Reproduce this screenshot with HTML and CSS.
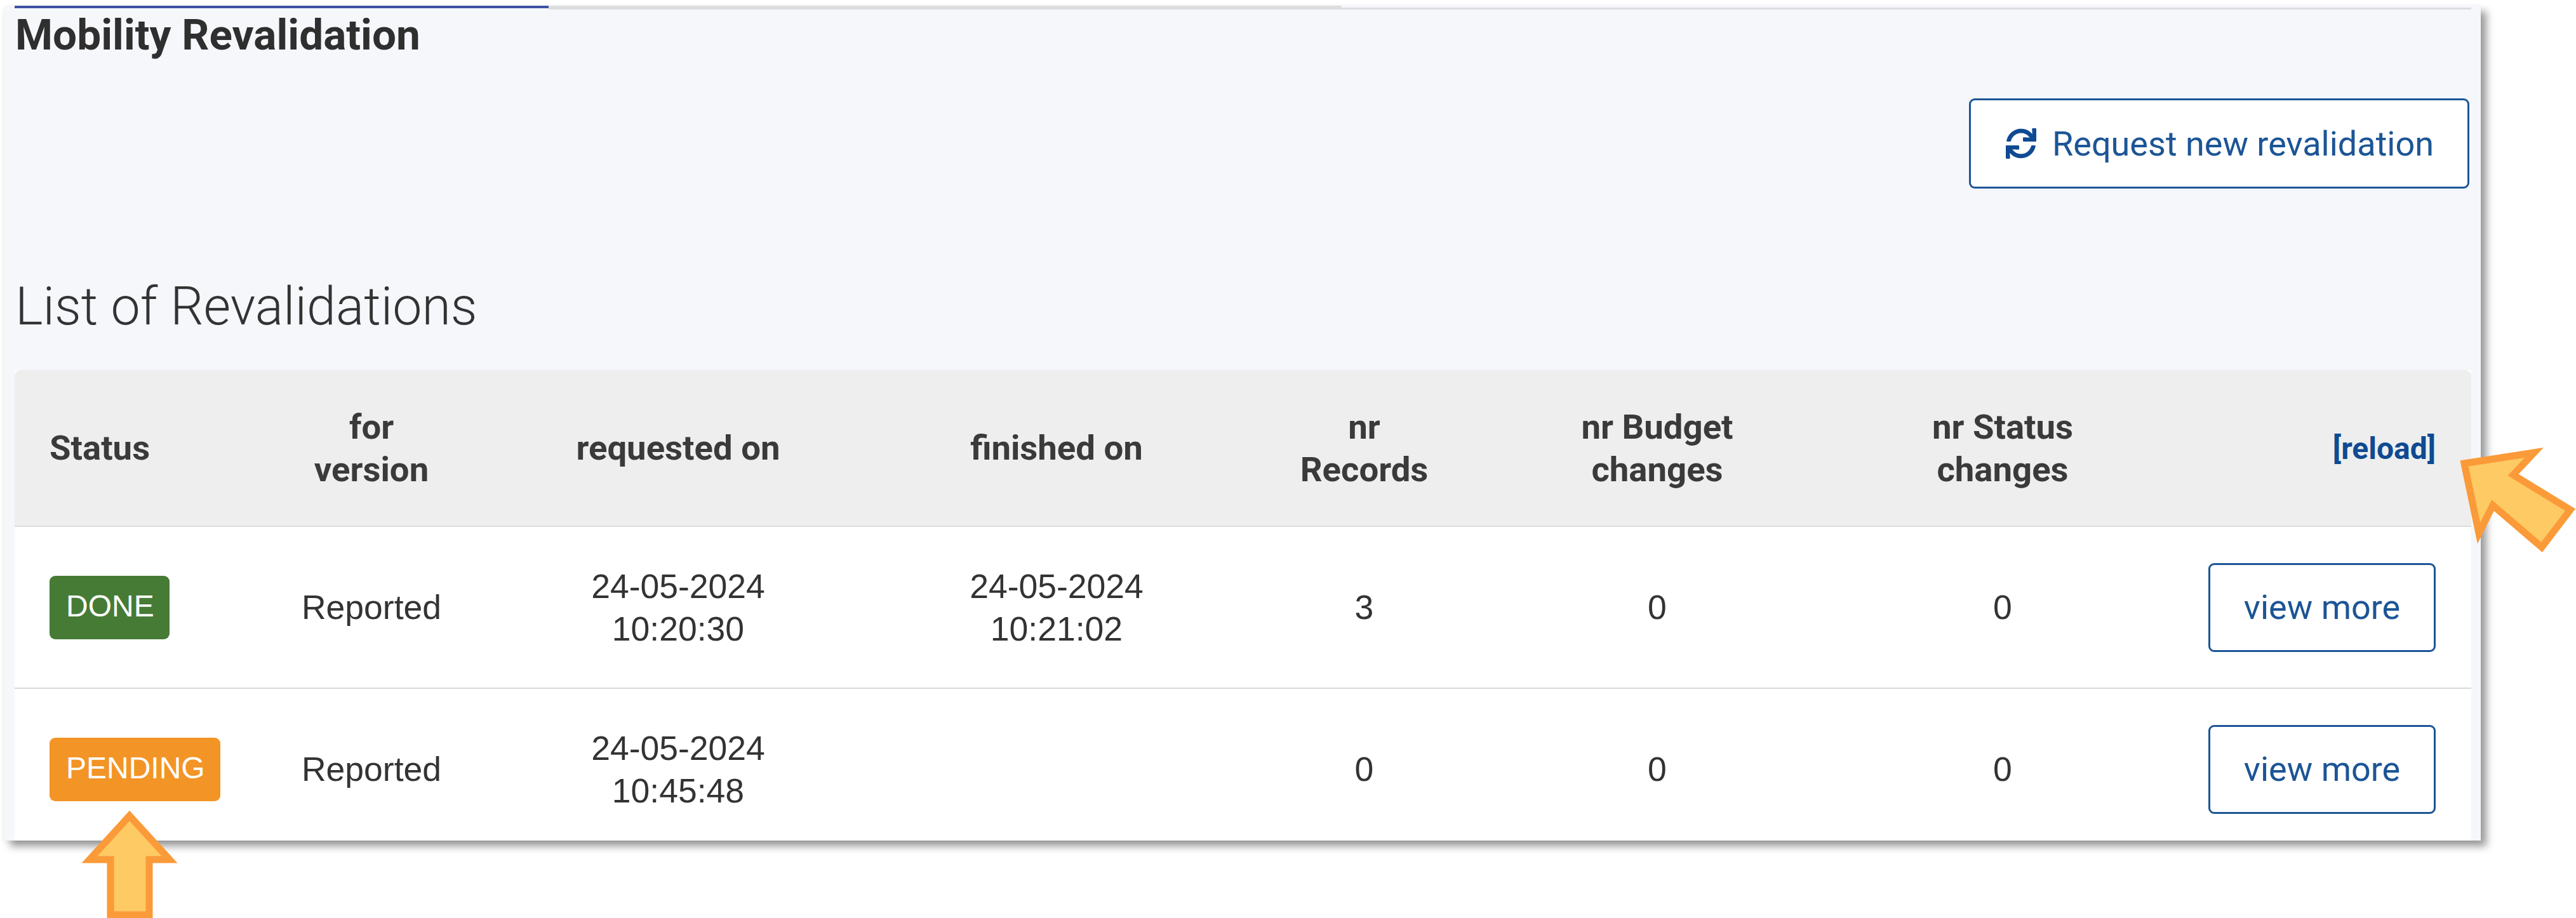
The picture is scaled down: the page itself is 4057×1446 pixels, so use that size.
FILE: index.html
```html
<!DOCTYPE html>
<html lang="en">
<head>
  <meta charset="UTF-8" />
  <title>Mobility Revalidation</title>
  <link rel="stylesheet" href="styles.css">
</head>
<body>
  <div class="panel">
    <div class="tabs">
      <div class="tab-active"></div>
      <div class="tab-rest"></div>
      <div class="tab-line"></div>
    </div>
    <h1 class="title">Mobility Revalidation</h1>
    <div class="actions">
      <button class="btn btn-request">
        <svg class="icon" viewBox="0 0 512 512"><path d="M440.65 12.57l4 82.77A247.16 247.16 0 0 0 255.83 8C134.73 8 33.91 94.92 12.29 209.82A12 12 0 0 0 24.09 224h49.05a12 12 0 0 0 11.67-9.26 175.91 175.91 0 0 1 317-56.94l-101.46-4.86a12 12 0 0 0-12.57 12v47.41a12 12 0 0 0 12 12H500a12 12 0 0 0 12-12V12a12 12 0 0 0-12-12h-47.37a12 12 0 0 0-11.98 12.57zM255.83 432a175.61 175.61 0 0 1-146-77.8l101.8 4.87a12 12 0 0 0 12.57-12v-47.4a12 12 0 0 0-12-12H12a12 12 0 0 0-12 12V500a12 12 0 0 0 12 12h47.35a12 12 0 0 0 12-12.6l-4.15-82.57A247.17 247.17 0 0 0 255.83 504c121.11 0 221.93-86.92 243.55-201.82a12 12 0 0 0-11.8-14.18h-49.05a12 12 0 0 0-11.67 9.26A175.86 175.86 0 0 1 255.83 432z"/></svg>
        Request new revalidation
      </button>
    </div>
    <h2 class="subtitle">List of Revalidations</h2>
    <table class="grid">
      <colgroup>
        <col class="col-status"><col class="col-version"><col class="col-requested"><col class="col-finished">
        <col class="col-records"><col class="col-budget"><col class="col-changes"><col class="col-action">
      </colgroup>
      <thead>
        <tr>
          <th class="left">Status</th>
          <th>for<br>version</th>
          <th>requested on</th>
          <th>finished on</th>
          <th>nr<br>Records</th>
          <th>nr Budget<br>changes</th>
          <th>nr Status<br>changes</th>
          <th class="right"><a class="reload" href="#">[reload]</a></th>
        </tr>
      </thead>
      <tbody>
        <tr>
          <td class="left"><span class="badge badge-done">DONE</span></td>
          <td>Reported</td>
          <td>24-05-2024<br>10:20:30</td>
          <td>24-05-2024<br>10:21:02</td>
          <td>3</td>
          <td>0</td>
          <td>0</td>
          <td class="right"><button class="btn btn-more">view more</button></td>
        </tr>
        <tr>
          <td class="left"><span class="badge badge-pending">PENDING</span></td>
          <td>Reported</td>
          <td>24-05-2024<br>10:45:48</td>
          <td></td>
          <td>0</td>
          <td>0</td>
          <td>0</td>
          <td class="right"><button class="btn btn-more">view more</button></td>
        </tr>
      </tbody>
    </table>
  </div>

  <!-- callout arrows pasted on top of the screenshot -->
  <svg class="callouts" viewBox="0 0 4057 1446">
    <path d="M204 1285 L267 1354 L235 1354 L235 1441 L174 1441 L174 1354 L141 1354 Z" />
    <path d="M3881 730 L3991 713 L3958 748 L4048 803 L4003 862 L3926 796 L3904 840 Z" />
  </svg>
</body>
</html>
```

FILE: styles.css
```css
html, body {
  margin: 0;
  padding: 0;
  background: #fff;
}
body {
  width: 4057px;
  height: 1446px;
  overflow: hidden;
  position: relative;
  font-family: "Liberation Sans", Arial, sans-serif;
  color: #333;
}
.panel {
  box-sizing: border-box;
  width: 3900px;
  height: 1315px;
  margin: 9px 0 0 7px;
  padding: 0 15px 0 16px;
  background: #f5f7fb;
  box-shadow: 9px 9px 12px rgba(0, 0, 0, 0.4), -2px 2px 6px rgba(0, 0, 0, 0.05);
  overflow: hidden;
}
.tabs {
  display: flex;
  align-items: flex-start;
  height: 6px;
}
.tab-active {
  width: 841px;
  height: 4px;
  background: #3f51a3;
}
.tab-rest {
  width: 1249px;
  height: 6px;
  background: #dcdddf;
}
.tab-line {
  flex: 1;
  height: 3px;
  margin-top: 3px;
  background: #dcdddf;
}
.title {
  margin: 0;
  padding: 2px 0 0 1px;
  font-family: Roboto, sans-serif;
  font-size: 67.5px;
  line-height: 76px;
  font-weight: 700;
  color: #2f2f2f;
}
.actions {
  display: flex;
  justify-content: flex-end;
  margin-top: 62px;
  padding-right: 3px;
}
.btn {
  box-sizing: border-box;
  background: #fff;
  border: 3px solid #1c5596;
  border-radius: 9px;
  color: #1c5596;
  font-family: Roboto, sans-serif;
  font-size: 54px;
  cursor: pointer;
}
.btn-request {
  display: flex;
  align-items: center;
  gap: 25px;
  width: 788px;
  height: 142px;
  padding: 0 0 0 55px;
}
.icon {
  width: 48px;
  height: 48px;
  fill: #0f4a92;
}
.subtitle {
  margin: 0;
  padding: 138px 0 0 1px;
  font-family: Roboto, sans-serif;
  font-size: 82.5px;
  line-height: 96px;
  font-weight: 300;
  color: #333;
}
.grid {
  width: 3869px;
  margin-top: 52px;
  table-layout: fixed;
  border-collapse: separate;
  border-spacing: 0;
  background: #fff;
}
.col-status { width: 377px; }
.col-version { width: 370px; }
.col-requested { width: 596px; }
.col-finished { width: 596px; }
.col-records { width: 373px; }
.col-budget { width: 550px; }
.col-changes { width: 538px; }
.col-action { width: 469px; }
.grid th {
  height: 245px;
  padding: 0;
  background: #eee;
  border-bottom: 2px solid #dcdcdc;
  font-family: Roboto, sans-serif;
  font-size: 54.5px;
  line-height: 67px;
  font-weight: 700;
  color: #3a3a3a;
  text-align: center;
}
.grid th:first-child { border-top-left-radius: 9px; }
.grid th:last-child { border-top-right-radius: 9px; }
.grid td {
  height: 253px;
  padding: 0;
  border-bottom: 2px solid #d9d9dd;
  font-size: 53.5px;
  line-height: 67px;
  color: #333;
  text-align: center;
}
.grid tbody tr:last-child td {
  border-bottom: 0;
}
.grid .left {
  padding-left: 55px;
  text-align: left;
}
.grid .right {
  padding-right: 56px;
  text-align: right;
}
.reload {
  font-size: 48px;
  font-weight: 700;
  color: #0f4a92;
  text-decoration: none;
}
.badge {
  display: inline-block;
  padding: 0 24px 0 26px;
  height: 100px;
  line-height: 96px;
  border-radius: 9px;
  font-size: 48px;
  color: #fff;
  vertical-align: middle;
}
.badge-done { background: #467b35; }
.badge-pending { background: #f39426; }
.btn-more {
  width: 358px;
  height: 140px;
  padding: 0;
  vertical-align: middle;
}
.callouts {
  position: absolute;
  left: 0;
  top: 0;
  width: 4057px;
  height: 1446px;
  pointer-events: none;
}
.callouts path {
  fill: #fdca64;
  stroke: #fb9a38;
  stroke-width: 11;
  stroke-linejoin: miter;
}
```
